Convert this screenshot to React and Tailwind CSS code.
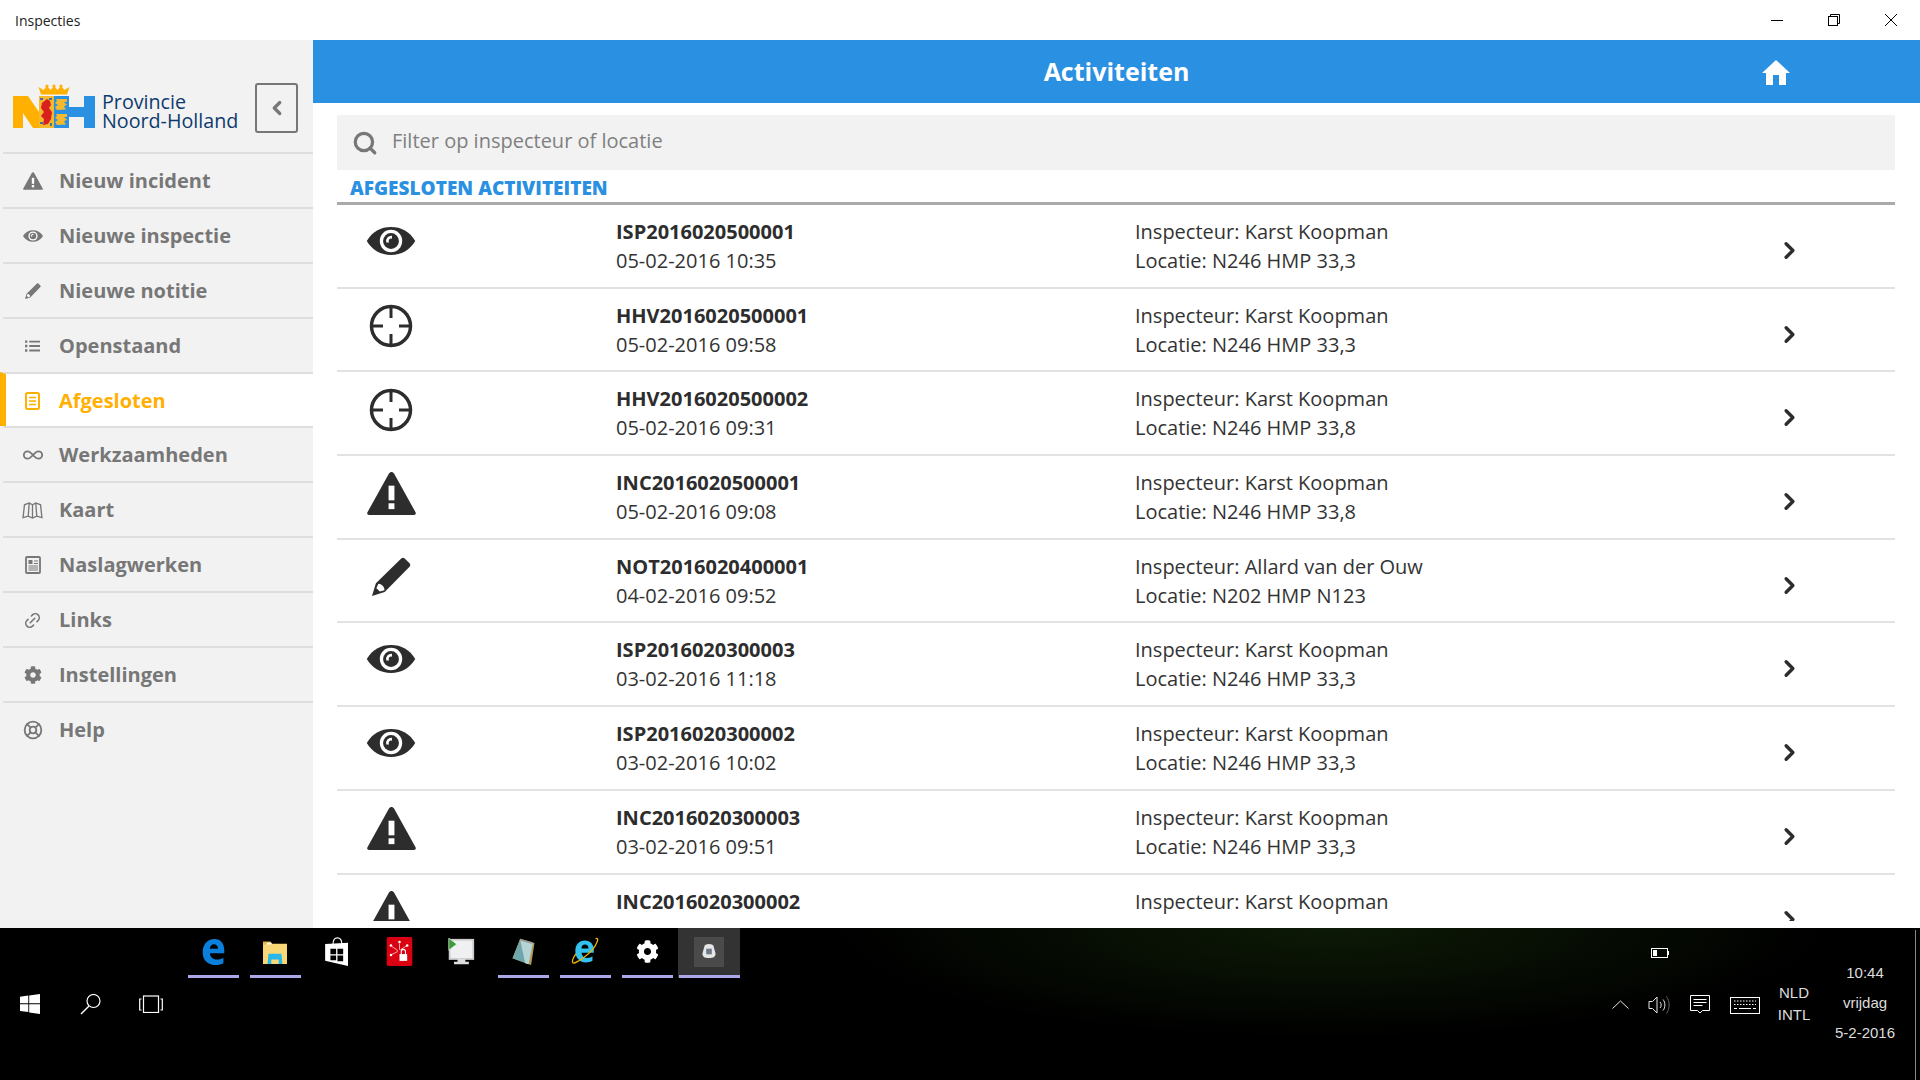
import React from "react";
import { ChevronLeft, ChevronRight, Infinity as InfinityIcon, LifeBuoy, Link2, Search } from "lucide-react";
import { FaCog } from "react-icons/fa";

const Eye = ({ className }) => (
  <svg viewBox="0 0 52 30" className={className}>
    <path d="M0 15C6 5 15 0 26 0s20 5 26 15c-6 10-15 15-26 15S6 25 0 15z" fill="currentColor" />
    <circle cx="26" cy="15" r="12" fill="#fff" />
    <circle cx="26" cy="15" r="8.500" fill="currentColor" />
    <path d="M27 9.500A5.500 5.500 0 0 0 21 16.500h3A2.600 2.600 0 0 1 27 12.500z" fill="#fff" />
  </svg>
);

const Warning = ({ className }) => (
  <svg viewBox="0 0 50 44" className={className}>
    <path d="M25 0c1 0 2 .6 2.600 1.600l22 39.600c.8 1.400-.2 2.800-1.700 2.800H2.100c-1.500 0-2.500-1.400-1.700-2.800l22-39.600C23 .6 24 0 25 0z" fill="currentColor" />
    <rect x="22" y="14" width="6" height="15" fill="#fff" />
    <rect x="22" y="32" width="6" height="6" fill="#fff" />
  </svg>
);

const Pencil = ({ className }) => (
  <svg viewBox="0 0 40 40" className={className}>
    <path d="M30 1.500c1-1 2.500-1 3.500 0l5 5c1 1 1 2.500 0 3.500L13 36 0 40l4-13z" fill="currentColor" />
    <path d="M6.500 27.500c3.500.3 6 2.800 6.300 6.500L8 35.500 4.500 32z" fill="#fff" />
  </svg>
);

const Crosshair = ({ className }) => (
  <svg viewBox="0 0 44 44" className={className} fill="none" stroke="currentColor">
    <circle cx="22" cy="22" r="19.500" strokeWidth="3.500" />
    <path d="M22 1v13M22 30v13M1 22h13M30 22h13" strokeWidth="3" />
  </svg>
);

const ListIcon = ({ className }) => (
  <svg viewBox="0 0 16 12" className={className} fill="currentColor">
    <path d="M0 0h2.500v2.500H0zM4.500 .3H16v2H4.500zM0 4.700h2.500v2.500H0zM4.500 5H16v2H4.500zM0 9.500h2.500V12H0zM4.500 9.800H16v2H4.500z" />
  </svg>
);

const DocIcon = ({ className }) => (
  <svg viewBox="0 0 15 18" className={className} fill="none" stroke="currentColor">
    <rect x="1" y="1" width="13" height="16" rx="1.500" strokeWidth="2" />
    <path d="M4 5.500h7M4 9h7M4 12.500h7" strokeWidth="1.500" />
  </svg>
);

const MapIcon = ({ className }) => (
  <svg viewBox="0 0 22 18" className={className} fill="none" stroke="currentColor" strokeWidth="1.400">
    <path d="M1 16.500 2.500 3 7.500 1 11 3l3.500-2 5 2L21 16.500l-5.500-1.500-4.500 2-4.500-2zM7.500 1l-1 14M14.500 1l1 14M11 3v14" />
  </svg>
);

const NewsIcon = ({ className }) => (
  <svg viewBox="0 0 16 18" className={className} fill="none" stroke="currentColor">
    <rect x="1" y="1" width="14" height="16" rx="1" strokeWidth="1.800" />
    <path d="M3.500 4h4v4h-4z" fill="currentColor" strokeWidth="0" />
    <path d="M9 5h4M9 7.500h4M3.500 10h9.500M3.500 12h9.500M3.500 14h9.500" strokeWidth="1.100" />
  </svg>
);

const HomeIcon = ({ className }) => (
  <svg viewBox="0 0 28 25" className={className} fill="currentColor">
    <path d="M14 0 28 13h-4v12h-7V15h-6v10H4V13H0z" />
  </svg>
);

const Logo = () => (
  <svg viewBox="0 0 82 45" className="w-[82px] h-[45px] shrink-0">
    <path d="M28 10.500 25.500 3l5 3L34 2l3.500 4L41 2l3.500 4L48 2l3.500 4 5-3-2.500 7.500z" fill="#ffb000" />
    <circle cx="34" cy="2" r="1.600" fill="#ffb000" />
    <circle cx="41" cy="2" r="1.600" fill="#ffb000" />
    <circle cx="48" cy="2" r="1.600" fill="#ffb000" />
    <path d="M0 12h15l11 16v16h-6L10 29v15H0z" fill="#ffb000" />
    <path d="M56 23h15V12h11v32H71V33H56z" fill="#2a90e2" />
    <rect x="26" y="12" width="15" height="32" fill="#f5b92e" />
    <path d="M29 19l5-4 3 2 1 4-2 3 3 4-1 7-3 5-5 1 1-6-3-3 3-4-3-4z" fill="#d8201f" />
    <path d="M27 14h3v2h-3zM36 14h3v2h-3zM27 38h3v2h-3zM37 39h2v3h-2z" fill="#4a6fa0" />
    <rect x="41" y="12" width="15" height="32" fill="#2a90e2" />
    <path d="M43 15h11v2.500l-3 1 3 2-3 2 2 3-9 .5-2-3 3-2-3-2 2-2zM43 30h11v2.500l-3 1 3 2-3 2 2 3-9 .5-2-3 3-2-3-2 2-2z" fill="#f5b92e" />
  </svg>
);

const StartIcon = () => (
  <svg viewBox="0 0 20 20" className="w-5 h-5" fill="#fff">
    <path d="M0 2.700 8.300 1.600V9.300H0zM9.200 1.500 20 0v9.300H9.200zM0 10.200H8.300V18L0 17zM9.200 10.200H20V20L9.200 18.500z" />
  </svg>
);

const TaskSearch = () => (
  <svg viewBox="0 0 21 21" className="w-[21px] h-[21px]" fill="none" stroke="#fff" strokeWidth="1.200">
    <circle cx="13.500" cy="7" r="6.500" />
    <path d="M9 12 1 20" strokeWidth="1.500" />
  </svg>
);

const TaskView = () => (
  <svg viewBox="0 0 24 18" className="w-6 h-[18px]" fill="none" stroke="#fff" strokeWidth="1.200">
    <rect x="4.500" y="1" width="15" height="16.500" />
    <path d="M2.500 4H.7v11h1.800M21.500 4h1.800v11h-1.800" />
  </svg>
);

const EdgeIcon = () => (
  <svg viewBox="0 0 26 30" className="w-[25px] h-[27px]">
    <path d="M1 16C1 7 6 1 14 1c7 0 11 5 11 13v3H9c.5 5 4 7 8 7 3 0 5-1 7-2v6c-2 1-5 2-8 2-9 0-15-5-15-14z M9 12h9c0-3-2-5-4.500-5S9 9 9 12z" fill="#0a7fdc" fillRule="evenodd" />
  </svg>
);

const FolderIcon = () => (
  <svg viewBox="0 0 28 26" className="w-7 h-6">
    <path d="M1 2h8l2 2h16v22H1z" fill="#f8d776" />
    <path d="M1 2h8l1 3H1z" fill="#e8b84a" />
    <path d="M5 3h5v2H5z" fill="#fff" />
    <path d="M7 15h14l1 11h-4v-5h-8v5H6z" fill="#29b6e8" />
  </svg>
);

const StoreIcon = () => (
  <svg viewBox="0 0 27 33" className="w-[26px] h-[29px]">
    <path d="M9 8c0-5 2-7 5-7s5 2 5 7" fill="none" stroke="#fff" strokeWidth="1.200" />
    <path d="M0 8 26 6.500V33L0 27z" fill="#fff" />
    <path d="M6 13.500h6.500v6H6zM14 13.500h6.500v6H14zM6 21h6.500v5.500H6zM14 21h6.500v6.500H14z" fill="#000" />
  </svg>
);

const RedIcon = () => (
  <svg viewBox="0 0 30 34" className="w-[29px] h-[29px]">
    <rect width="30" height="34" rx="2" fill="#d90012" />
    <path d="M15 8v7M6 11l7 5M24 10l-8 5M5 21l8-4" stroke="#fff" strokeWidth="0.800" />
    <circle cx="15" cy="6" r="1.500" fill="#fff" />
    <circle cx="5" cy="10" r="1.500" fill="#fff" />
    <circle cx="24" cy="10" r="1.500" fill="#fff" />
    <circle cx="5" cy="21" r="1.500" fill="#fff" />
    <rect x="15" y="20" width="9" height="8" fill="#fff" />
    <path d="M17 20v-3a2.500 2.500 0 0 1 5 0v3" fill="none" stroke="#fff" strokeWidth="1.200" />
  </svg>
);

const MonitorIcon = () => (
  <svg viewBox="0 0 30 32" className="w-7 h-7">
    <rect x="2" y="2" width="27" height="22" fill="#eef0f2" stroke="#ccc" strokeWidth="2" />
    <path d="M11 24h9v3h4v3H7v-3h4z" fill="#ddd" />
    <path d="M1 0l9 7-9 7z" fill="#3d9a3d" stroke="#fff" strokeWidth="0.600" />
  </svg>
);

const NotepadIcon = () => (
  <svg viewBox="0 0 28 32" className="w-[27px] h-[27px]">
    <path d="M10 1 27 6l-4 26L1 24z" fill="#b79a5a" />
    <path d="M10 2l15 4-5 25L1 24z" fill="#6fa6ac" />
    <path d="M10 2l15 4-5 25-4-1z" fill="#b6d4d6" />
    <path d="M10 1l15 4-.5 2L9.500 3z" fill="#999" />
  </svg>
);

const IeIcon = () => (
  <svg viewBox="0 0 30 33" className="w-7 h-[29px]">
    <path d="M4 16c0-7 4-12 11-12 6 0 10 4 10 11v3H11c.5 4 3 6 6.500 6 2.500 0 4.500-1 6-2v5c-2 1-4.500 2-7.500 2C9 29 4 24 4 16zM11 13h8c0-3-1.500-4.500-4-4.500S11 10 11 13z" fill="#33c1ef" fillRule="evenodd" />
    <path d="M27 2C29 1 30 2 29 5c-2 6-8 13-15 18-7 5-12 8-13 6-1-2 1-6 4-10" fill="none" stroke="#f0b400" strokeWidth="1.500" />
  </svg>
);

const Chip = () => (
  <div className="w-[30px] h-[30px] bg-[#4a4a4a] flex items-center justify-center">
    <svg viewBox="0 0 14 16" className="w-[14px] h-[15px]">
      <path d="M2 3c0-2 2-3 5-3s5 1 5 3l2 7c0 3-2 5-7 5s-7-2-7-5z" fill="#e6e6e6" />
      <rect x="4" y="5" width="6" height="6" fill="#6b7b8c" />
    </svg>
  </div>
);

const menu = [
  { label: "Nieuw incident", icon: <Warning className="w-5 h-[18px]" /> },
  { label: "Nieuwe inspectie", icon: <Eye className="w-5 h-3" /> },
  { label: "Nieuwe notitie", icon: <Pencil className="w-4 h-4" /> },
  { label: "Openstaand", icon: <ListIcon className="w-[15px] h-3" /> },
  { label: "Afgesloten", icon: <DocIcon className="w-[15px] h-[18px]" />, active: true },
  { label: "Werkzaamheden", icon: <InfinityIcon className="w-[22px] h-[22px]" strokeWidth={2} /> },
  { label: "Kaart", icon: <MapIcon className="w-[21px] h-[17px]" /> },
  { label: "Naslagwerken", icon: <NewsIcon className="w-4 h-[18px]" /> },
  { label: "Links", icon: <Link2 className="w-[19px] h-[19px] -rotate-45" strokeWidth={2} /> },
  { label: "Instellingen", icon: <FaCog className="w-[18px] h-[18px]" /> },
  { label: "Help", icon: <LifeBuoy className="w-5 h-5" strokeWidth={2.2} /> },
];

const rows = [
  { icon: "eye", id: "ISP2016020500001", date: "05-02-2016 10:35", who: "Karst Koopman", loc: "N246 HMP 33,3" },
  { icon: "cross", id: "HHV2016020500001", date: "05-02-2016 09:58", who: "Karst Koopman", loc: "N246 HMP 33,3" },
  { icon: "cross", id: "HHV2016020500002", date: "05-02-2016 09:31", who: "Karst Koopman", loc: "N246 HMP 33,8" },
  { icon: "warn", id: "INC2016020500001", date: "05-02-2016 09:08", who: "Karst Koopman", loc: "N246 HMP 33,8" },
  { icon: "pen", id: "NOT2016020400001", date: "04-02-2016 09:52", who: "Allard van der Ouw", loc: "N202 HMP N123" },
  { icon: "eye", id: "ISP2016020300003", date: "03-02-2016 11:18", who: "Karst Koopman", loc: "N246 HMP 33,3" },
  { icon: "eye", id: "ISP2016020300002", date: "03-02-2016 10:02", who: "Karst Koopman", loc: "N246 HMP 33,3" },
  { icon: "warn", id: "INC2016020300003", date: "03-02-2016 09:51", who: "Karst Koopman", loc: "N246 HMP 33,3" },
  { icon: "warn", id: "INC2016020300002", date: "03-02-2016 09:40", who: "Karst Koopman", loc: "N246 HMP 33,3" },
];

const RowIcon = ({ type }) => {
  if (type === "eye") return <Eye className="w-[51px] h-[28px] -mt-[10px]" />;
  if (type === "cross") return <Crosshair className="w-[44px] h-[44px] -mt-[7px]" />;
  if (type === "warn") return <Warning className="w-[49px] h-[43px] -mt-[6px]" />;
  return <Pencil className="w-[39px] h-[39px] -mt-[9px]" />;
};

const TaskItem = ({ children, open, active }) => (
  <div className={`w-[62px] h-[50px] flex justify-center ${active ? "bg-[#333333]" : ""}`}>
    <div className={`h-full flex flex-col items-center ${active ? "w-[61px]" : "w-[51px]"}`}>
      <div className="flex-1 flex items-center justify-center">{children}</div>
      <div className={`h-[3px] w-full ${open ? "bg-[#aaa8e8]" : ""}`}></div>
    </div>
  </div>
);

const App = () => {
  return (
    <div className="w-[1920px] h-[1080px] flex flex-col overflow-hidden bg-white font-['Open_Sans',sans-serif]">
      <div className="h-10 shrink-0 flex items-center justify-between bg-white">
        <span className="pl-[15px] text-[14px] text-[#222]">Inspecties</span>
        <div className="flex items-center gap-[45px] pr-[23px] text-black">
          <svg viewBox="0 0 12 12" className="w-3 h-3" stroke="currentColor" fill="none"><path d="M0 6.500h12" /></svg>
          <svg viewBox="0 0 12 12" className="w-3 h-3" stroke="currentColor" fill="none"><rect x=".5" y="2.500" width="9" height="9" /><path d="M2.500 2.500V.5h9v9h-2" /></svg>
          <svg viewBox="0 0 12 12" className="w-3 h-3" stroke="currentColor" fill="none"><path d="M0 0l12 12M12 0 0 12" /></svg>
        </div>
      </div>

      <div className="h-[888px] shrink-0 flex">
        <aside className="w-[313px] shrink-0 bg-[#f2f2f2] flex flex-col">
          <div className="h-[112px] pt-[43px] pl-[13px] pr-[15px] flex items-start">
            <div className="mt-[1px]"><Logo /></div>
            <div className="ml-[7px] mt-[10px] text-[19.700px] leading-[18.500px] text-[#0d3b6e]">
              <div>Provincie</div>
              <div>Noord-Holland</div>
            </div>
            <button className="ml-auto w-[43px] h-[50px] border-2 border-[#777] rounded-[3px] flex items-center justify-center text-[#777]">
              <ChevronLeft className="w-[22px] h-[22px]" strokeWidth={3.5} />
            </button>
          </div>
          <nav className="flex flex-col ml-[3px]">
            {menu.map((item) => (
              <div
                key={item.label}
                className={`h-[54.900px] pt-[1px] border-t-2 border-[#dedede] flex items-center font-bold text-[20px] ${item.active ? "-ml-[3px] bg-white text-[#ffb000] border-l-[6px] border-l-[#ffb000]" : "pl-[3px] text-[#777]"}`}
              >
                <span className="w-[53px] flex justify-center pl-[3px] pr-[3px]">{item.icon}</span>
                <span>{item.label}</span>
              </div>
            ))}
          </nav>
        </aside>

        <main className="flex-1 min-w-0 flex flex-col pb-[7px]">
          <header className="h-[63px] shrink-0 bg-[#2a90e2] text-white grid grid-cols-[1fr_auto_1fr] items-center">
            <div></div>
            <h1 className="text-[25px] font-bold">Activiteiten</h1>
            <div className="flex justify-end pr-[130px]">
              <HomeIcon className="w-[28px] h-[25px] mt-[2px]" />
            </div>
          </header>
          <div className="flex-1 min-h-0 flex flex-col px-[24px] pr-[25px] pt-3">
            <div className="h-[55px] shrink-0 bg-[#f2f2f2] flex items-center pl-[15px] text-[#777]">
              <Search className="w-[26px] h-[26px]" strokeWidth={3} />
              <span className="ml-[14px] pb-[4px] text-[20px] text-[#808080]">Filter op inspecteur of locatie</span>
            </div>
            <h2 className="shrink-0 h-[35px] pl-[13px] pt-[4px] text-[19px] leading-[28px] font-extrabold text-[#2a90e2] border-b-[3px] border-[#aaa]">
              AFGESLOTEN ACTIVITEITEN
            </h2>
            <div className="flex-1 min-h-0 overflow-hidden">
              {rows.map((row) => (
                <div key={row.id} className="h-[83.700px] border-b-2 border-[#e2e2e2] flex text-[20px] leading-[29px] text-[#333]">
                  <div className="w-[279px] pl-[29px] flex-none flex items-center text-[#2d2d2d]">
                    <div className="w-[50px] flex justify-center"><RowIcon type={row.icon} /></div>
                  </div>
                  <div className="w-[519px] flex-none pt-3">
                    <div className="font-bold text-[#2d2d2d]">{row.id}</div>
                    <div>{row.date}</div>
                  </div>
                  <div className="flex-1 pt-3">
                    <div>Inspecteur: {row.who}</div>
                    <div>Locatie: {row.loc}</div>
                  </div>
                  <div className="w-[119px] flex-none flex items-center text-[#2d2d2d]">
                    <ChevronRight className="w-[27px] h-[27px] mt-[9px]" strokeWidth={3} />
                  </div>
                </div>
              ))}
            </div>
          </div>
        </main>
      </div>

      <div className="flex-1 min-h-0 flex bg-black bg-[radial-gradient(ellipse_500px_110px_at_1330px_0px,#0d1a06_0%,#000_100%)] border-r-[6px] border-black relative">
        <div className="flex-1 min-w-0 flex flex-col">
          <div className="h-[50px] flex items-start pl-[182px]">
            <TaskItem open><EdgeIcon /></TaskItem>
            <TaskItem open><FolderIcon /></TaskItem>
            <TaskItem><StoreIcon /></TaskItem>
            <TaskItem><RedIcon /></TaskItem>
            <TaskItem><MonitorIcon /></TaskItem>
            <TaskItem open><NotepadIcon /></TaskItem>
            <TaskItem open><IeIcon /></TaskItem>
            <TaskItem open><FaCog className="w-[23px] h-[23px] text-white" /></TaskItem>
            <TaskItem open active><Chip /></TaskItem>
            <div className="ml-auto mr-[143px] mt-[20px] flex items-center">
              <div className="w-[17px] h-[10px] border border-white flex items-center pl-[1px]"><div className="w-[4px] h-[6px] bg-white"></div></div>
              <div className="w-[1px] h-1 bg-white"></div>
            </div>
          </div>
          <div className="flex-1 flex items-start pt-[12px]">
            <div className="flex items-center h-[28px] pl-[20px]">
              <StartIcon />
              <div className="ml-[40px]"><TaskSearch /></div>
              <div className="ml-[38px]"><TaskView /></div>
            </div>
            <div className="ml-auto flex items-start -mt-[2px]">
              <svg viewBox="0 0 17 9" className="w-[17px] h-[9px] mt-[12px]" fill="none" stroke="#e6e6e6" strokeWidth="1"><path d="M.5 8.500 8.500 1l8 7.500" /></svg>
              <svg viewBox="0 0 22 20" className="w-[22px] h-5 ml-[19px] mt-[7px]" fill="none" stroke="#e6e6e6" strokeWidth="1"><path d="M1 6.500h3.500L9 2v16l-4.500-4.500H1zM12 7c1.500 1.500 1.500 4.500 0 6M15 4.500c2.500 3 2.500 8 0 11" /><path d="M18.500 1.500c3.500 5 3.500 12 0 17" stroke="#666" /></svg>
              <svg viewBox="0 0 20 20" className="w-5 h-5 ml-[20px] mt-[7px]" fill="none" stroke="#fff" strokeWidth="1"><path d="M.5.5h19v15h-7l-2.500 2.500-2.500-2.500h-7zM3.500 4.500h13M3.500 7.500h13M3.500 10.500h9" /></svg>
              <svg viewBox="0 0 30 17" className="w-[30px] h-[17px] ml-[20px] mt-[9px]" fill="none" stroke="#fff" strokeWidth="1"><rect x=".5" y=".5" width="29" height="16" /><path d="M4 4h22M4 7.500h22" strokeDasharray="1.500 1.500" /><path d="M4 11.500h3M9 11.500h12M23 11.500h3" /></svg>
              <div className="ml-[16px] w-[36px] text-center text-[15px] leading-[22px] text-[#ddd] font-['Liberation_Sans',sans-serif] -mt-[6px]">
                <div>NLD</div>
                <div>INTL</div>
              </div>
            </div>
          </div>
        </div>
        <div className="w-[98px] shrink-0 ml-[4px] pt-[30px] flex flex-col items-center text-[15px] leading-[30px] text-[#ddd] font-['Liberation_Sans',sans-serif]">
          <div>10:44</div>
          <div>vrijdag</div>
          <div>5-2-2016</div>
        </div>
        <div className="absolute right-[-2px] top-[2px] bottom-0 w-[1px] bg-[#888]"></div>
      </div>
    </div>
  );
};

export default App;
